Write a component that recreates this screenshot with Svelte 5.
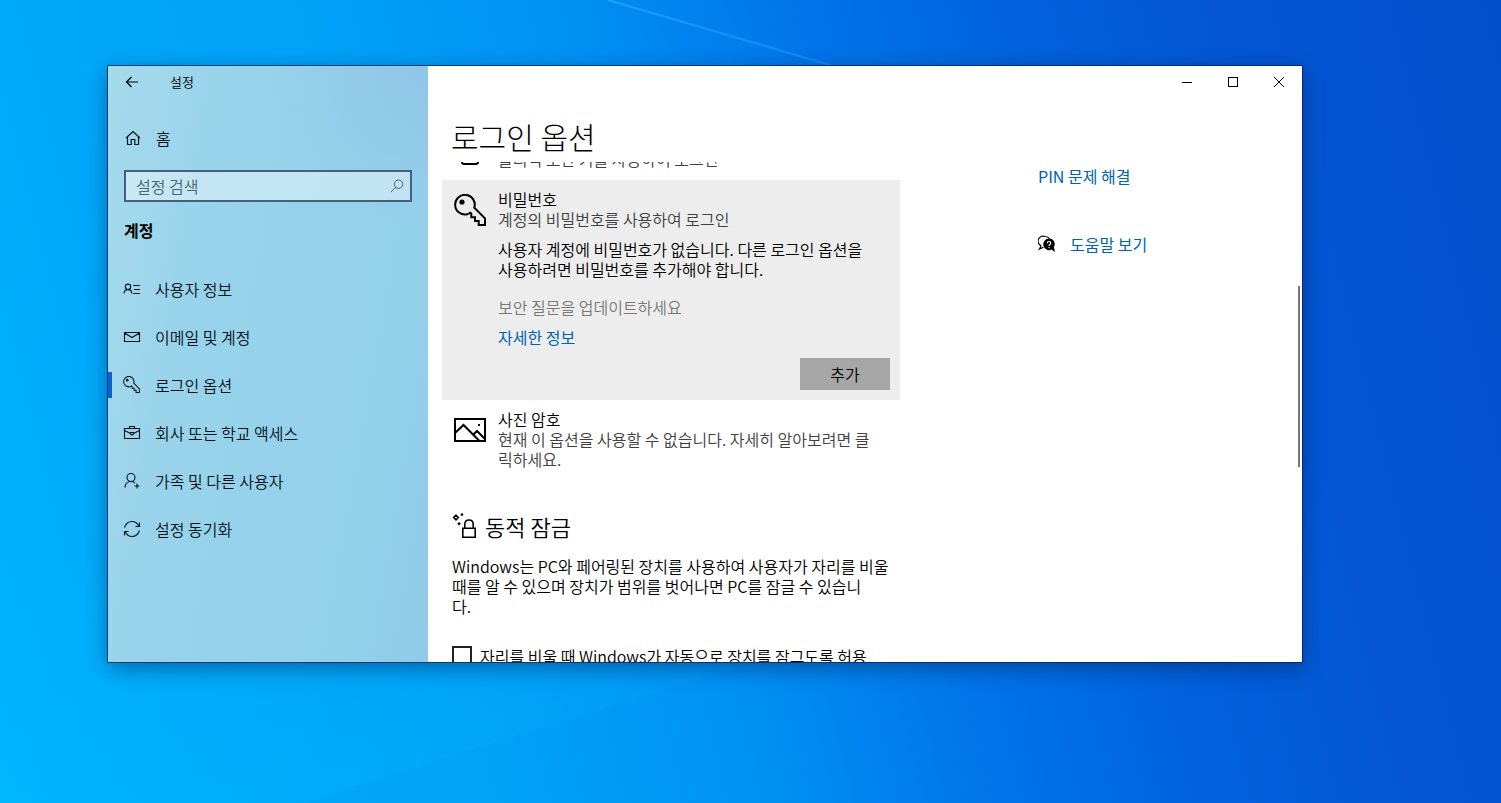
<script lang="ts">
	type IconName = 'profile' | 'mail' | 'key' | 'briefcase' | 'family' | 'sync';

	interface NavItem {
		icon: IconName;
		label: string;
	}

	const navItems: NavItem[] = [
		{ icon: 'profile', label: '사용자 정보' },
		{ icon: 'mail', label: '이메일 및 계정' },
		{ icon: 'key', label: '로그인 옵션' },
		{ icon: 'briefcase', label: '회사 또는 학교 액세스' },
		{ icon: 'family', label: '가족 및 다른 사용자' },
		{ icon: 'sync', label: '설정 동기화' }
	];

	let active = $state('로그인 옵션');
	let query = $state('');
	let autoLock = $state(false);
</script>

{#snippet keyShape()}
	<path
		d="M13.2 20.2A9.8 9.8 0 1 1 20.3 13.6L31 24.3V31H24.7V27H21V23.3H17.3V19.6L16.3 18.8Q14.8 20 13.2 20.2Z"
	/>
	<circle cx="8" cy="8" r="1.6" fill="currentColor" />
{/snippet}

<div class="desktop">
	<svg class="wallpaper" viewBox="0 0 1501 803" preserveAspectRatio="none" aria-hidden="true">
		<defs>
			<linearGradient id="base" gradientUnits="userSpaceOnUse" x1="-188" y1="47" x2="1412" y2="-353">
				<stop offset="0" stop-color="#00b4fc" />
				<stop offset="0.12" stop-color="#00a9fa" />
				<stop offset="0.3" stop-color="#00a2f8" />
				<stop offset="0.45" stop-color="#0091f4" />
				<stop offset="0.59" stop-color="#0074e8" />
				<stop offset="0.71" stop-color="#0062dc" />
				<stop offset="0.83" stop-color="#0456d4" />
				<stop offset="1" stop-color="#044fcc" />
			</linearGradient>
			<linearGradient id="ray" x1="0" y1="0" x2="1" y2="0">
				<stop offset="0" stop-color="#30b0ff" stop-opacity="0.6" />
				<stop offset="1" stop-color="#2090ff" stop-opacity="0.6" />
			</linearGradient>
			<linearGradient id="beam" x1="0" y1="1" x2="0.5" y2="0">
				<stop offset="0" stop-color="#00bcff" stop-opacity="0.3" />
				<stop offset="1" stop-color="#00b0ff" stop-opacity="0.08" />
			</linearGradient>
		</defs>
		<rect width="1501" height="803" fill="url(#base)" />
		<path d="M0 598L108 578L760 660L300 803H0Z" fill="url(#beam)" />
		<path d="M608 0L840 68" stroke="url(#ray)" stroke-width="2" />
	</svg>

	<div class="window">
		<aside class="sidebar">
			<div class="title-row">
				<button class="back" aria-label="뒤로">
					<svg width="14" height="12" viewBox="0 0 14 12" fill="none" stroke="currentColor">
						<path d="M13 6H1.5M6.5 1L1.5 6L6.5 11" stroke-width="1.2" />
					</svg>
				</button>
				<span class="app-name">설정</span>
			</div>

			<a class="nav-link home" href="#home">
				<svg width="18" height="16" viewBox="0 0 18 16" fill="none" stroke="currentColor">
					<path d="M2 8L9 1.5L16 8M3.5 7V14.5H7.2V9.5H10.8V14.5H14.5V7" stroke-width="1.2" />
				</svg>
				<span>홈</span>
			</a>

			<div class="search">
				<input type="text" placeholder="설정 검색" aria-label="설정 검색" bind:value={query} />
				<svg width="14" height="14" viewBox="0 0 14 14" fill="none" stroke="currentColor">
					<circle cx="8.6" cy="5.2" r="4.2" />
					<path d="M5.6 8.2L0.8 13.2" />
				</svg>
			</div>

			<h2>계정</h2>

			<nav>
				{#each navItems as item (item.label)}
					<a
						class="nav-link"
						class:active={active === item.label}
						href="#{item.icon}"
						aria-current={active === item.label ? 'page' : undefined}
						onclick={() => (active = item.label)}
					>
						{#if item.icon === 'key'}
							<svg width="18" height="18" viewBox="0 0 34 34" fill="none" stroke="currentColor" stroke-width="2">
								{@render keyShape()}
							</svg>
						{:else}
							<svg width="18" height="18" viewBox="0 0 18 18" fill="none" stroke="currentColor" stroke-width="1.1">
								{#if item.icon === 'profile'}
									<circle cx="5" cy="6.8" r="2.7" />
									<path d="M1 13.5Q1.2 9.6 5 9.6T8.8 13.5M10 5.5H17M11 9.5H17M10 13.5H17" />
								{:else if item.icon === 'mail'}
									<path d="M1.5 4.5H16.5V13.5H1.5ZM1.5 5L9 9.5L16.5 5" />
								{:else if item.icon === 'briefcase'}
									<path d="M1.5 4.5H16.5V14.5H1.5ZM6.5 4.5V2.5H11.5V4.5M1.5 6.5L7.5 9.5M10.5 9.5L16.5 6.5M7.5 8.5H10.5V10L9 11L7.5 10Z" />
								{:else if item.icon === 'family'}
									<circle cx="8" cy="5.5" r="4" />
									<path d="M2 15.5Q2.5 9.5 8 9.5Q10.5 9.5 12 11M14 11.5V16.5M11.5 14H16.5" />
								{:else}
									<path d="M1.5 7.5Q3.5 1.5 9 1.5Q13.8 1.5 16 6.5M16.5 2.5V6.5H12.5M16.5 10.5Q14.5 16.5 9 16.5Q4.2 16.5 2 11.5M1.5 15.5V11.5H5.5" />
								{/if}
							</svg>
						{/if}
						<span>{item.label}</span>
					</a>
				{/each}
			</nav>
		</aside>

		<main>
			<div class="caption-buttons">
				<button aria-label="최소화">
					<svg width="10" height="10" viewBox="0 0 10 10" stroke="currentColor"><path d="M0 5.5H10" /></svg>
				</button>
				<button aria-label="최대화">
					<svg width="10" height="10" viewBox="0 0 10 10" fill="none" stroke="currentColor">
						<rect x="0.5" y="0.5" width="9" height="9" />
					</svg>
				</button>
				<button aria-label="닫기">
					<svg width="10" height="10" viewBox="0 0 10 10" stroke="currentColor">
						<path d="M0 0L10 10M10 0L0 10" />
					</svg>
				</button>
			</div>

			<h1>로그인 옵션</h1>

			<div class="viewport">
				<div class="content">
					<section class="option passed">
						<svg width="32" height="16" viewBox="0 0 32 16" fill="none" stroke="currentColor" stroke-width="2">
							<path d="M8 0V13Q8 15 10 15H22Q24 15 24 13V0" />
						</svg>
						<p class="muted">물리적 보안 키를 사용하여 로그인</p>
					</section>

					<section class="option selected">
						<svg width="32" height="32" viewBox="0 0 32 32" fill="none" stroke="currentColor" stroke-width="2">
							{@render keyShape()}
						</svg>
						<div class="option-body">
							<h3>비밀번호</h3>
							<p class="muted">계정의 비밀번호를 사용하여 로그인</p>
							<p class="message">
								사용자 계정에 비밀번호가 없습니다. 다른 로그인 옵션을<br />사용하려면 비밀번호를 추가해야
								합니다.
							</p>
							<p class="disabled">보안 질문을 업데이트하세요</p>
							<a class="link" href="#more">자세한 정보</a>
							<button class="add">추가</button>
						</div>
					</section>

					<section class="option">
						<svg width="32" height="32" viewBox="0 0 32 32" fill="none" stroke="currentColor" stroke-width="2">
							<path d="M1 5H31V27H1ZM1 19L9.5 11L25.5 27M19 21L23 17L31 25" />
							<rect x="24" y="10" width="2" height="2" fill="currentColor" stroke="none" />
						</svg>
						<div class="option-body">
							<h3>사진 암호</h3>
							<p class="muted">
								현재 이 옵션을 사용할 수 없습니다. 자세히 알아보려면 클<br />릭하세요.
							</p>
						</div>
					</section>

					<section class="dynamic-lock">
						<h2>
							<svg width="26" height="26" viewBox="0 0 26 26" fill="none" stroke="currentColor" stroke-width="1.6">
								<path d="M10.8 15.2H23.2V24.2H10.8ZM12.8 15V11.5Q12.8 7 17 7T21.2 11.5V15" />
								<path d="M4 2.2L6.3 4.5L4 6.8L1.7 4.5Z" />
								<path
									d="M10 0L11.6 1.6L10 3.2L8.4 1.6ZM7 9L8.8 10.8L7 12.6L5.2 10.8Z"
									fill="currentColor"
									stroke="none"
								/>
							</svg>
							<span>동적 잠금</span>
						</h2>
						<p>
							Windows는 PC와 페어링된 장치를 사용하여 사용자가 자리를 비울<br />때를 알 수 있으며 장치가
							범위를 벗어나면 PC를 잠글 수 있습니<br />다.
						</p>
						<label>
							<input type="checkbox" bind:checked={autoLock} />
							<span>자리를 비울 때 Windows가 자동으로 장치를 잠그도록 허용</span>
						</label>
					</section>
				</div>

				<div class="related">
					<a class="link" href="#pin">PIN 문제 해결</a>
					<div class="help">
						<svg width="18" height="18" viewBox="0 0 18 18" aria-hidden="true">
							<path
								d="M3.2 10.8A5 5 0 0 1 7 1.5Q10.2 1.5 11.6 3.8M3.2 10.8L1.5 14L5.5 12.2"
								fill="none"
								stroke="currentColor"
								stroke-width="1.2"
							/>
							<path d="M11 3.5A5.8 5.8 0 1 0 13.4 14.6L17 17L16 12.4A5.8 5.8 0 0 0 11 3.5Z" fill="currentColor" />
							<path d="M9.3 8.2Q9.3 6.5 11 6.5T12.7 8.1Q12.7 9 11.8 9.6Q11 10 11 11" fill="none" stroke="#fff" stroke-width="1.2" />
							<rect x="10.4" y="12" width="1.2" height="1.2" fill="#fff" />
						</svg>
						<a class="link" href="#help">도움말 보기</a>
					</div>
				</div>

				<div class="scrollbar" aria-hidden="true"></div>
			</div>
		</main>
	</div>
</div>

<style>
	:global(body) {
		margin: 0;
	}

	.desktop {
		position: relative;
		box-sizing: border-box;
		display: grid;
		height: 100vh;
		padding: 66px 199px 141px 108px;
		overflow: hidden;
		background: #0084f0;
		color: #000;
		font-family: 'Noto Sans CJK KR', sans-serif;
		font-size: 16px;
		font-weight: 350;
		line-height: 20px;
	}

	.wallpaper {
		position: absolute;
		inset: 0;
		width: 100%;
		height: 100%;
	}

	h1,
	h2,
	h3,
	p {
		margin: 0;
		font-size: inherit;
		font-weight: inherit;
	}

	button {
		padding: 0;
		border: 0;
		background: none;
		color: inherit;
		font: inherit;
	}

	svg {
		flex: none;
	}

	.window {
		position: relative;
		display: grid;
		grid-template-columns: 320px minmax(0, 1fr);
		min-height: 0;
		background: #fff;
		box-shadow:
			0 0 0 1px rgb(0 35 75 / 75%),
			0 6px 20px rgb(0 20 70 / 45%);
	}

	/* Sidebar */
	.sidebar {
		display: flex;
		flex-direction: column;
		min-height: 0;
		background:
			radial-gradient(circle at 100% 0, rgb(142 192 230 / 70%), transparent 160px),
			linear-gradient(100deg, #a6daec 0%, #98d3eb 30%, #93d0ea 80%, #8fcbe8 100%);
	}

	.title-row {
		display: flex;
		align-items: center;
		height: 32px;
		font-size: 13px;
	}

	.back {
		display: grid;
		place-items: center;
		width: 48px;
		height: 32px;
	}

	.app-name {
		margin-left: 14px;
	}

	.nav-link {
		display: flex;
		align-items: center;
		gap: 14px;
		box-sizing: border-box;
		height: 48px;
		padding-left: 15px;
		color: #06131c;
		text-decoration: none;
	}

	.nav-link.active {
		padding-left: 11px;
		border-left: 4px solid #0a63d0;
		border-image: linear-gradient(transparent 25%, #0a63d0 25% 75%, transparent 75%) 1;
		border-width: 0 0 0 4px;
	}

	.home {
		margin-top: 16px;
		padding-left: 16px;
	}

	.search {
		display: flex;
		align-items: center;
		box-sizing: border-box;
		height: 32px;
		margin: 8px 16px 0;
		padding-right: 6px;
		border: 2px solid #45607a;
		background: rgb(255 255 255 / 42%);
		color: #45607a;
	}

	.search input {
		flex: 1;
		min-width: 0;
		padding: 0 10px;
		border: 0;
		outline: 0;
		background: none;
		font: inherit;
	}

	.search input::placeholder {
		color: #4a6478;
		opacity: 1;
	}

	.sidebar h2 {
		margin: 18px 16px 25px;
		font-weight: 700;
	}

	/* Page */
	main {
		display: flex;
		flex-direction: column;
		min-width: 0;
		min-height: 0;
	}

	.caption-buttons {
		display: flex;
		justify-content: flex-end;
	}

	.caption-buttons button {
		display: grid;
		place-items: center;
		width: 46px;
		height: 32px;
	}

	h1 {
		padding: 18px 23px 6px;
		font-size: 30px;
		font-weight: 300;
		line-height: 40px;
	}

	.viewport {
		display: flex;
		flex: 1;
		min-height: 0;
		overflow: hidden;
	}

	/* The list is scrolled part way past its first entry */
	.content {
		flex: none;
		width: 458px;
		margin: -13px 0 0 14px;
	}

	.option {
		display: flex;
		gap: 12px;
		padding: 9px 10px 11px 12px;
	}

	.option > svg {
		margin-top: 5px;
	}

	.option.passed {
		padding-top: 0;
	}

	.option.passed > svg {
		margin-top: 0;
	}

	.selected {
		padding-bottom: 10px;
		background: #ededed;
	}

	.option-body {
		display: flex;
		flex: 1;
		flex-direction: column;
		align-items: flex-start;
		min-width: 0;
		white-space: nowrap;
	}

	.muted {
		color: #404040;
	}

	.message {
		margin-top: 10px;
	}

	.disabled {
		margin: 18px 0 10px;
		color: #787878;
	}

	.link {
		color: #0063b1;
		font-weight: 400;
		text-decoration: none;
	}

	.add {
		align-self: flex-end;
		width: 90px;
		height: 32px;
		margin-top: 11px;
		background: #a6a6a6;
	}

	.dynamic-lock {
		padding: 30px 0 0 10px;
		white-space: nowrap;
	}

	.dynamic-lock h2 {
		display: flex;
		align-items: center;
		gap: 7px;
		height: 32px;
		font-size: 22px;
	}

	.dynamic-lock p {
		margin: 14px 0 30px;
	}

	.dynamic-lock label {
		display: flex;
		align-items: center;
		gap: 8px;
	}

	.dynamic-lock input {
		box-sizing: border-box;
		width: 20px;
		height: 20px;
		margin: 0;
		border: 2px solid #222;
		appearance: none;
	}

	.dynamic-lock input:checked {
		background: #0063b1;
	}

	.related {
		display: flex;
		flex: 1;
		flex-direction: column;
		gap: 48px;
		padding: 4px 0 0 138px;
	}

	.help {
		display: flex;
		align-items: center;
		gap: 14px;
	}

	.scrollbar {
		width: 2px;
		height: 181px;
		margin: 124px 2px 0 0;
		background: #767676;
	}
</style>
